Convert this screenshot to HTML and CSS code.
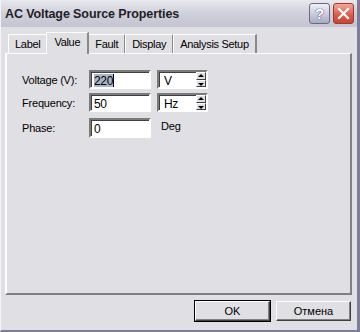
FILE: index.html
```html
<!DOCTYPE html>
<html lang="ru">
<head>
  <meta charset="UTF-8">
  <title>AC Voltage Source Properties</title>
  <link rel="stylesheet" href="styles.css">
</head>
<body>
  <div class="window">
    <div class="titlebar">
      <span class="title">AC Voltage Source Properties</span>
      <div class="caption-buttons">
        <span class="cap-btn help">?</span>
        <span class="cap-btn close">
          <svg width="13" height="13" viewBox="0 0 13 13"><path d="M2 2 L11 11 M11 2 L2 11" stroke="#fff" stroke-width="2.2" stroke-linecap="square"/></svg>
        </span>
      </div>
    </div>

    <div class="client">
      <div class="tabs">
        <span class="tab">Label</span>
        <span class="tab active">Value</span>
        <span class="tab">Fault</span>
        <span class="tab">Display</span>
        <span class="tab">Analysis Setup</span>
      </div>

      <div class="panel">
        <div class="form">
          <span class="lbl">Voltage (V):</span>
          <span class="field"><span class="sel">220</span><span class="caret"></span></span>
          <span class="unit">V<span class="spin"><span class="arr up"></span><span class="arr down"></span></span></span>

          <span class="lbl">Frequency:</span>
          <span class="field">50</span>
          <span class="unit">Hz<span class="spin"><span class="arr up"></span><span class="arr down"></span></span></span>

          <span class="lbl phase">Phase:</span>
          <span class="field phase">0</span>
          <span class="deg phase">Deg</span>
        </div>
      </div>

      <div class="footer">
        <button class="btn default">OK</button>
        <button class="btn">Отмена</button>
      </div>
    </div>
  </div>
</body>
</html>
```

FILE: styles.css
```css
body {
  margin: 0;
  background: #e0dfe3;
  font-family: "Liberation Sans", Arial, sans-serif;
  font-size: 11px;
  color: #000;
}
.window {
  width: 360px;
  height: 332px;
  box-sizing: border-box;
  background: #e0dfe3;
  border-right: 3px solid #7d7d9a;
  border-bottom: 2px solid #7d7d9a;
  border-left: 1px solid #f4f4f8;
  display: flex;
  flex-direction: column;
}
.titlebar {
  height: 27px;
  flex: none;
  display: flex;
  align-items: center;
  justify-content: space-between;
  padding: 0 3px 0 4px;
  background: linear-gradient(#e8e8ee, #d2d2dc 45%, #c4c4d2);
}
.title {
  font-weight: bold;
  font-size: 12.5px;
  color: #1e1e28;
  letter-spacing: -0.1px;
}
.caption-buttons {
  display: flex;
  gap: 3px;
}
.cap-btn {
  width: 19px;
  height: 19px;
  border: 1px solid #6a6a86;
  border-radius: 3px;
  display: flex;
  align-items: center;
  justify-content: center;
}
.help {
  background: linear-gradient(#eef0f8, #a8abc4);
  color: #fff;
  font-weight: bold;
  font-size: 15px;
  text-shadow: 0 0 1px #404060, 0 0 1px #404060;
}
.close {
  background: linear-gradient(#f4a898, #dc5846 60%, #c84434);
  border-color: #a03a30;
}
.client {
  flex: 1;
  padding: 5px 5px 0 4px;
  display: flex;
  flex-direction: column;
}
.tabs {
  display: flex;
  align-items: flex-end;
  height: 21px;
  padding-left: 3px;
  position: relative;
  z-index: 1;
  letter-spacing: -0.3px;
}
.tab {
  height: 18px;
  line-height: 18px;
  padding: 0 6px;
  border: 1px solid #fff;
  border-bottom: none;
  border-right: 2px solid #8a8a8a;
  background: #e0dfe3;
  margin-right: -1px;
}
.tab.active {
  height: 21px;
  line-height: 19px;
  margin: 0 -1px -1px -1px;
  padding: 0 7px;
  position: relative;
  z-index: 2;
}
.panel {
  height: 242px;
  box-sizing: border-box;
  border-top: 1px solid #fff;
  border-left: 2px solid #fff;
  border-right: 2px solid #808080;
  border-bottom: 2px solid #808080;
  background: #e0dfe3;
  padding: 16px 0 0 15px;
}
.form {
  display: grid;
  grid-template-columns: 61px 62px 51px;
  grid-auto-rows: 19px;
  row-gap: 4px;
  column-gap: 6px;
  align-items: center;
  letter-spacing: -0.2px;
}
.form .phase {
  margin-top: 4px;
}
.field,
.unit {
  height: 19px;
  box-sizing: border-box;
  border: 2px solid;
  border-color: #7a7a7a #fff #fff #7a7a7a;
  box-shadow: inset 1px 1px 0 #404040;
  background: #fff;
  padding: 2px 0 0 3px;
  font-size: 12px;
  line-height: 14px;
  letter-spacing: -0.3px;
  display: flex;
}
.field.phase {
  height: 20px;
}
.sel {
  background: #aab4c8;
  height: 13px;
}
.caret {
  width: 1px;
  height: 13px;
  background: #000;
}
.unit {
  position: relative;
  padding-left: 5px;
}
.spin {
  position: absolute;
  right: 0;
  top: 0;
  width: 10px;
  height: 15px;
  display: flex;
  flex-direction: column;
}
.arr {
  flex: 1;
  background: #e0dfe3;
  border: 1px solid;
  border-color: #fff #404040 #404040 #fff;
  position: relative;
}
.arr::after {
  content: "";
  position: absolute;
  left: 1px;
  border-left: 3px solid transparent;
  border-right: 3px solid transparent;
}
.up::after {
  top: 1px;
  border-bottom: 3px solid #000;
}
.down::after {
  top: 2px;
  border-top: 3px solid #000;
}
.deg {
  padding-left: 4px;
  align-self: start;
}
.footer {
  display: flex;
  justify-content: flex-end;
  gap: 6px;
  padding: 6px 1px 0 0;
}
.btn {
  width: 75px;
  height: 20px;
  font-family: "Liberation Sans", Arial, sans-serif;
  font-size: 11px;
  background: #e0dfe3;
  border: 1px solid;
  border-color: #fff #404040 #404040 #fff;
  box-shadow: inset -1px -1px 0 #808080;
  padding: 0;
}
.btn.default {
  outline: 1px solid #000;
}
```
